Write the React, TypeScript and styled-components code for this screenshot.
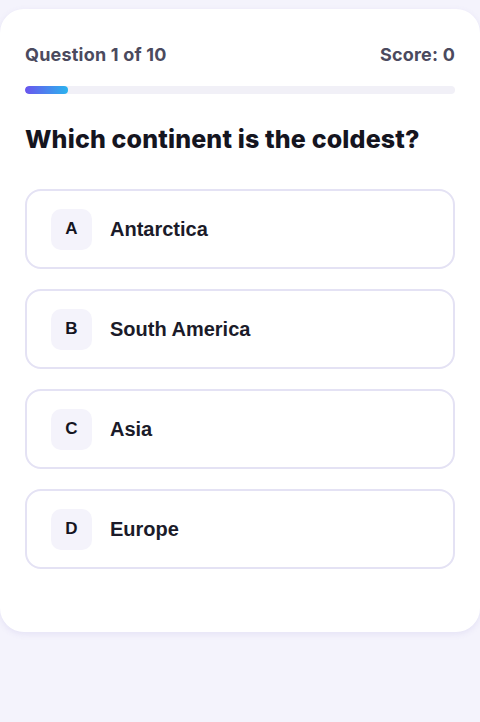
import React from "react";
import styled, { createGlobalStyle } from "styled-components";

const GlobalStyle = createGlobalStyle`
  html, body {
    margin: 0;
    padding: 0;
    background: #f4f3fc;
  }
  * {
    box-sizing: border-box;
  }
`;

const Page = styled.div`
  min-height: 722px;
  padding-top: 9px;
  background: #f4f3fc;
`;

const Card = styled.div`
  background: #ffffff;
  border-radius: 24px;
  box-shadow: 0 2px 6px rgba(120, 110, 200, 0.12);
  padding: 36px 25px 63px;
  height: 623px;
`;

const Header = styled.div`
  display: flex;
  justify-content: space-between;
  align-items: center;
  font-family: Inter, "Open Sans", sans-serif;
  font-size: 18px;
  font-weight: 700;
  line-height: 20px;
  color: #4b4a5e;
  letter-spacing: 0.2px;
`;

const Track = styled.div`
  margin-top: 21px;
  height: 8px;
  border-radius: 4px;
  background: #f1f0f7;
  overflow: hidden;
`;

const Fill = styled.div`
  height: 100%;
  border-radius: 4px;
  background: linear-gradient(90deg, #6a55ee 0%, #2bb3ee 100%);
`;

const Question = styled.h1`
  margin: 30px 0 34px;
  font-family: Inter, "Open Sans", sans-serif;
  font-size: 25px;
  font-weight: 800;
  line-height: 31px;
  color: #15151f;
  letter-spacing: 0.15px;
`;

const Options = styled.div`
  display: flex;
  flex-direction: column;
  gap: 20px;
`;

const Option = styled.button`
  display: flex;
  align-items: center;
  gap: 18px;
  height: 80px;
  width: 100%;
  padding: 0 24px;
  background: #ffffff;
  border: 2px solid #e4e2f4;
  border-radius: 16px;
  cursor: pointer;
  text-align: left;
`;

const Badge = styled.span`
  display: flex;
  align-items: center;
  justify-content: center;
  width: 41px;
  height: 41px;
  border-radius: 10px;
  background: #f4f3fb;
  font-family: "Liberation Sans", Arial, sans-serif;
  font-size: 17px;
  font-weight: 700;
  color: #15151f;
`;

const Label = styled.span`
  font-family: "Liberation Sans", Arial, sans-serif;
  font-size: 20px;
  font-weight: 700;
  color: #1b1b29;
`;

const answers = [
  { key: "A", text: "Antarctica" },
  { key: "B", text: "South America" },
  { key: "C", text: "Asia" },
  { key: "D", text: "Europe" },
];

const App: React.FC = () => {
  const current = 1;
  const total = 10;
  return (
    <Page>
      <GlobalStyle />
      <Card>
        <Header>
          <span>
            Question {current} of {total}
          </span>
          <span>Score: 0</span>
        </Header>
        <Track>
          <Fill style={{ width: `${(current / total) * 100}%` }} />
        </Track>
        <Question>Which continent is the coldest?</Question>
        <Options>
          {answers.map((a) => (
            <Option key={a.key}>
              <Badge>{a.key}</Badge>
              <Label>{a.text}</Label>
            </Option>
          ))}
        </Options>
      </Card>
    </Page>
  );
};

export default App;
